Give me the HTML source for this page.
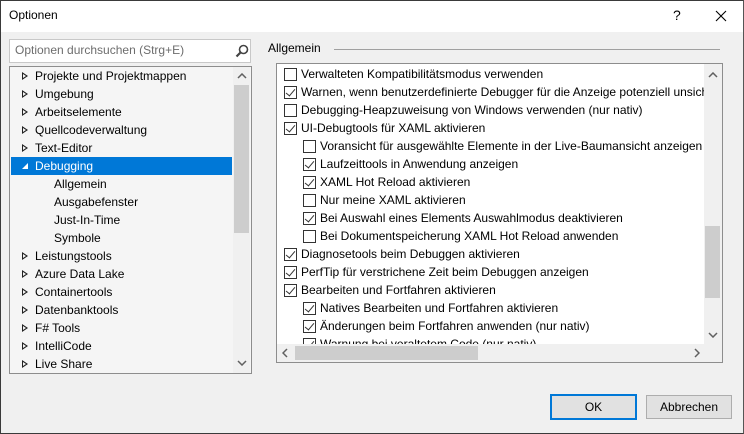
<!DOCTYPE html>
<html><head><meta charset="utf-8"><style>
*{box-sizing:border-box;margin:0;padding:0}
body{width:744px;height:434px;overflow:hidden;font-family:"Segoe UI","Liberation Sans",sans-serif;font-size:12px;color:#000;background:#f0f0f0;position:relative}
.win{position:absolute;left:0;top:0;width:744px;height:434px;border:1px solid #3a3a3a;border-right-color:#555;background:#f0f0f0}
.title{position:absolute;left:0;top:0;width:742px;height:31px;background:#fff}
.a{position:absolute;white-space:nowrap}
.search{position:absolute;left:8px;top:38px;width:242px;height:24px;background:#fff;border:1px solid #c8c8c8}
.tree{position:absolute;left:8px;top:65px;width:243px;height:308px;background:#f5f5f5;border:1px solid #8d8d8d;overflow:hidden}
.row{position:absolute;height:18px;line-height:18px;left:0;width:222px;margin-top:-1px}
.tri{position:absolute;left:12px;top:5px;width:0;height:0;border-left:6px solid #222;border-top:4px solid transparent;border-bottom:4px solid transparent}
.tri:after{content:"";position:absolute;left:-5px;top:-2px;border-left:3px solid #f5f5f5;border-top:2px solid transparent;border-bottom:2px solid transparent}
.panel{position:absolute;left:275px;top:62px;width:447px;height:300px;border:1px solid #8d8d8d;background:#fff;overflow:hidden}
.cb{position:absolute;width:13px;height:13px;border:1px solid #333;background:#fff}
.cb.c:after{content:"";position:absolute;left:3px;top:0px;width:4px;height:8px;border-right:1.3px solid #333;border-bottom:1.3px solid #333;transform:rotate(40deg)}
.lbl{position:absolute;height:18px;line-height:18px;white-space:nowrap}
.btn{position:absolute;height:24px;background:#e1e1e1;border:1px solid #adadad;text-align:center;line-height:22px}
</style></head><body>
<div class="win">
<div class="title">
 <div class="a" style="left:8px;top:7px;font-size:12px">Optionen</div>
 <div class="a" style="left:672px;top:6px;font-size:14px">?</div>
 <svg class="a" style="left:714px;top:9px" width="12" height="12"><path d="M1 1L11 11M11 1L1 11" stroke="#000" stroke-width="1.1"/></svg>
</div>
<div class="search">
 <div class="a" style="left:5px;top:3px;color:#6d6d6d">Optionen durchsuchen (Strg+E)</div>
 <svg class="a" style="left:225px;top:4px" width="14" height="14"><circle cx="8.5" cy="5.5" r="4" stroke="#444" stroke-width="1.6" fill="none"/><path d="M5.5 8.5L1.5 12.5" stroke="#444" stroke-width="2.2"/></svg>
</div>
<div class="tree">
 <div class="a" style="left:223px;top:0;width:17px;height:306px;background:#f0f0f0"></div>
 <div class="a" style="left:224px;top:18px;width:15px;height:148px;background:#cdcdcd"></div>
 <svg class="a" style="left:227px;top:6px" width="10" height="6"><path d="M1 5L5 1L9 5" stroke="#606060" stroke-width="1.5" fill="none"/></svg>
 <svg class="a" style="left:227px;top:293px" width="10" height="6"><path d="M1 1L5 5L9 1" stroke="#606060" stroke-width="1.5" fill="none"/></svg>
 <div class="row" style="top:1px"><div class="tri"></div><span class="a" style="left:25px">Projekte und Projektmappen</span></div>
 <div class="row" style="top:19px"><div class="tri"></div><span class="a" style="left:25px">Umgebung</span></div>
 <div class="row" style="top:37px"><div class="tri"></div><span class="a" style="left:25px">Arbeitselemente</span></div>
 <div class="row" style="top:55px"><div class="tri"></div><span class="a" style="left:25px">Quellcodeverwaltung</span></div>
 <div class="row" style="top:73px"><div class="tri"></div><span class="a" style="left:25px">Text-Editor</span></div>
 <div class="row" style="top:91px;left:1px;width:221px;background:#0078d7;color:#fff"><svg class="a" style="left:10px;top:5px" width="8" height="8"><path d="M7 1L7 7L1 7Z" fill="#fff"/></svg><span class="a" style="left:24px">Debugging</span></div>
 <div class="row" style="top:109px"><span class="a" style="left:44px">Allgemein</span></div>
 <div class="row" style="top:127px"><span class="a" style="left:44px">Ausgabefenster</span></div>
 <div class="row" style="top:145px"><span class="a" style="left:44px">Just-In-Time</span></div>
 <div class="row" style="top:163px"><span class="a" style="left:44px">Symbole</span></div>
 <div class="row" style="top:181px"><div class="tri"></div><span class="a" style="left:25px">Leistungstools</span></div>
 <div class="row" style="top:199px"><div class="tri"></div><span class="a" style="left:25px">Azure Data Lake</span></div>
 <div class="row" style="top:217px"><div class="tri"></div><span class="a" style="left:25px">Containertools</span></div>
 <div class="row" style="top:235px"><div class="tri"></div><span class="a" style="left:25px">Datenbanktools</span></div>
 <div class="row" style="top:253px"><div class="tri"></div><span class="a" style="left:25px">F# Tools</span></div>
 <div class="row" style="top:271px"><div class="tri"></div><span class="a" style="left:25px">IntelliCode</span></div>
 <div class="row" style="top:289px"><div class="tri"></div><span class="a" style="left:25px">Live Share</span></div>
</div>
<div class="a" style="left:267px;top:40px">Allgemein</div>
<div class="a" style="left:333px;top:48px;width:386px;height:1px;background:#a0a0a0"></div>
<div class="panel">
 <div class="cb" style="left:7px;top:4px"></div><div class="lbl" style="left:24px;top:1px">Verwalteten Kompatibilitätsmodus verwenden</div>
 <div class="cb c" style="left:7px;top:22px"></div><div class="lbl" style="left:24px;top:19px">Warnen, wenn benutzerdefinierte Debugger für die Anzeige potenziell unsicher</div>
 <div class="cb" style="left:7px;top:40px"></div><div class="lbl" style="left:24px;top:37px">Debugging-Heapzuweisung von Windows verwenden (nur nativ)</div>
 <div class="cb c" style="left:7px;top:58px"></div><div class="lbl" style="left:24px;top:55px">UI-Debugtools für XAML aktivieren</div>
 <div class="cb" style="left:26px;top:76px"></div><div class="lbl" style="left:43px;top:73px">Voransicht für ausgewählte Elemente in der Live-Baumansicht anzeigen</div>
 <div class="cb c" style="left:26px;top:94px"></div><div class="lbl" style="left:43px;top:91px">Laufzeittools in Anwendung anzeigen</div>
 <div class="cb c" style="left:26px;top:112px"></div><div class="lbl" style="left:43px;top:109px">XAML Hot Reload aktivieren</div>
 <div class="cb" style="left:26px;top:130px"></div><div class="lbl" style="left:43px;top:127px">Nur meine XAML aktivieren</div>
 <div class="cb c" style="left:26px;top:148px"></div><div class="lbl" style="left:43px;top:145px">Bei Auswahl eines Elements Auswahlmodus deaktivieren</div>
 <div class="cb" style="left:26px;top:166px"></div><div class="lbl" style="left:43px;top:163px">Bei Dokumentspeicherung XAML Hot Reload anwenden</div>
 <div class="cb c" style="left:7px;top:184px"></div><div class="lbl" style="left:24px;top:181px">Diagnosetools beim Debuggen aktivieren</div>
 <div class="cb c" style="left:7px;top:202px"></div><div class="lbl" style="left:24px;top:199px">PerfTip für verstrichene Zeit beim Debuggen anzeigen</div>
 <div class="cb c" style="left:7px;top:220px"></div><div class="lbl" style="left:24px;top:217px">Bearbeiten und Fortfahren aktivieren</div>
 <div class="cb c" style="left:26px;top:238px"></div><div class="lbl" style="left:43px;top:235px">Natives Bearbeiten und Fortfahren aktivieren</div>
 <div class="cb c" style="left:26px;top:256px"></div><div class="lbl" style="left:43px;top:253px">Änderungen beim Fortfahren anwenden (nur nativ)</div>
 <div class="cb c" style="left:26px;top:274px"></div><div class="lbl" style="left:43px;top:271px">Warnung bei veraltetem Code (nur nativ)</div>
 <div class="a" style="left:427px;top:0;width:18px;height:298px;background:#f0f0f0"></div>
 <div class="a" style="left:428px;top:162px;width:15px;height:72px;background:#cdcdcd"></div>
 <svg class="a" style="left:431px;top:8px" width="10" height="6"><path d="M1 5L5 1L9 5" stroke="#606060" stroke-width="1.5" fill="none"/></svg>
 <svg class="a" style="left:431px;top:268px" width="10" height="6"><path d="M1 1L5 5L9 1" stroke="#606060" stroke-width="1.5" fill="none"/></svg>
 <div class="a" style="left:0;top:280px;width:445px;height:18px;background:#f0f0f0"></div>
 <div class="a" style="left:18px;top:282px;width:183px;height:14px;background:#cdcdcd"></div>
 <svg class="a" style="left:5px;top:284px" width="6" height="10"><path d="M5 1L1 5L5 9" stroke="#606060" stroke-width="1.5" fill="none"/></svg>
 <svg class="a" style="left:417px;top:284px" width="6" height="10"><path d="M1 1L5 5L1 9" stroke="#606060" stroke-width="1.5" fill="none"/></svg>
</div>
<div class="btn" style="left:549px;top:393px;width:87px;height:26px;border:2px solid #0078d7;line-height:22px">OK</div>
<div class="btn" style="left:645px;top:394px;width:86px">Abbrechen</div>
</div>
</body></html>
